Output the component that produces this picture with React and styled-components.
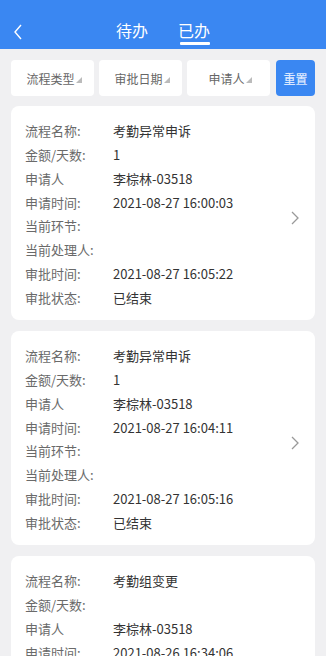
import React from "react";
import styled, { createGlobalStyle } from "styled-components";

const Global = createGlobalStyle`
  html, body { margin: 0; padding: 0; background: #f0f0f2; }
  body { font-family: "Noto Sans CJK SC", "Noto Sans", sans-serif; }
  * { box-sizing: border-box; }
`;

const Page = styled.div`
  width: 326px;
  height: 656px;
  overflow: hidden;
  background: #f0f0f2;
`;

const Header = styled.div`
  height: 49px;
  background: #3a87f2;
  position: relative;
  display: flex;
  align-items: flex-end;
  justify-content: center;
  padding-bottom: 4px;
`;

const Back = styled.div`
  position: absolute;
  left: 12px;
  top: 22px;
  width: 12px;
  height: 18px;
`;

const Tabs = styled.div`
  display: flex;
  gap: 30px;
`;

const Tab = styled.div`
  position: relative;
  color: #fff;
  font-size: 16px;
  line-height: 22px;
  padding-bottom: 4px;
  &::after {
    content: "";
    display: ${(p) => (p.active ? "block" : "none")};
    position: absolute;
    left: 2px;
    right: 0;
    bottom: 0;
    height: 3px;
    background: #fff;
    border-radius: 1px;
  }
`;

const Filters = styled.div`
  display: flex;
  gap: 5px;
  padding: 11px 11px 0 11px;
`;

const FilterBtn = styled.div`
  position: relative;
  width: 83px;
  height: 36px;
  background: #fff;
  border-radius: 4px;
  display: flex;
  align-items: center;
  justify-content: center;
  color: #666;
  font-size: 12px;
  padding-right: 4px;
  &::after {
    content: "";
    position: absolute;
    right: ${(p) => p.tri}px;
    top: 17px;
    width: 0;
    height: 0;
    border-left: 6px solid transparent;
    border-bottom: 6px solid #bbb;
  }
`;

const ResetBtn = styled.div`
  width: 39px;
  height: 36px;
  margin-left: 1px;
  background: #3a87f2;
  border-radius: 4px;
  color: #dce8ff;
  font-size: 12px;
  font-weight: 500;
  display: flex;
  align-items: center;
  justify-content: center;
`;

const List = styled.div`
  display: flex;
  flex-direction: column;
  gap: 11px;
  padding: 10px 11px 0 11px;
`;

const Card = styled.div`
  position: relative;
  background: #fff;
  border-radius: 8px;
  padding: 13px 14px 11px 14px;
`;

const Row = styled.div`
  display: flex;
  height: 23.75px;
  align-items: center;
  font-size: 13px;
`;

const Label = styled.div`
  width: 88px;
  color: #6a6a6a;
  flex-shrink: 0;
  white-space: nowrap;
`;

const Value = styled.div`
  color: #333;
  white-space: nowrap;
`;

const Chevron = styled.div`
  position: absolute;
  right: 16px;
  top: 50%;
  margin-top: -7px;
  width: 8px;
  height: 14px;
`;

const data = [
  ["考勤异常申诉", "1", "李棕林-03518", "2021-08-27 16:00:03", "", "", "2021-08-27 16:05:22", "已结束"],
  ["考勤异常申诉", "1", "李棕林-03518", "2021-08-27 16:04:11", "", "", "2021-08-27 16:05:16", "已结束"],
  ["考勤组变更", "", "李棕林-03518", "2021-08-26 16:34:06", "", "", "2021-08-26 16:40:00", "已结束"],
];

const labels = ["流程名称:", "金额/天数:", "申请人", "申请时间:", "当前环节:", "当前处理人:", "审批时间:", "审批状态:"];

export default function App() {
  return (
    <Page>
      <Global />
      <Header>
        <Back>
          <svg width="12" height="18" viewBox="0 0 12 18">
            <path d="M9 2 L3 9 L9 16" fill="none" stroke="#fff" strokeWidth="1.4" />
          </svg>
        </Back>
        <Tabs>
          <Tab>待办</Tab>
          <Tab active>已办</Tab>
        </Tabs>
      </Header>
      <Filters>
        <FilterBtn tri={12}>流程类型</FilterBtn>
        <FilterBtn tri={12}>审批日期</FilterBtn>
        <FilterBtn tri={18}>申请人</FilterBtn>
        <ResetBtn>重置</ResetBtn>
      </Filters>
      <List>
        {data.map((d, i) => (
          <Card key={i}>
            {labels.map((l, j) => (
              <Row key={j}>
                <Label>{l}</Label>
                <Value>{d[j]}</Value>
              </Row>
            ))}
            <Chevron>
              <svg width="8" height="14" viewBox="0 0 8 14">
                <path d="M1 1 L7 7 L1 13" fill="none" stroke="#999" strokeWidth="1.3" />
              </svg>
            </Chevron>
          </Card>
        ))}
      </List>
    </Page>
  );
}
